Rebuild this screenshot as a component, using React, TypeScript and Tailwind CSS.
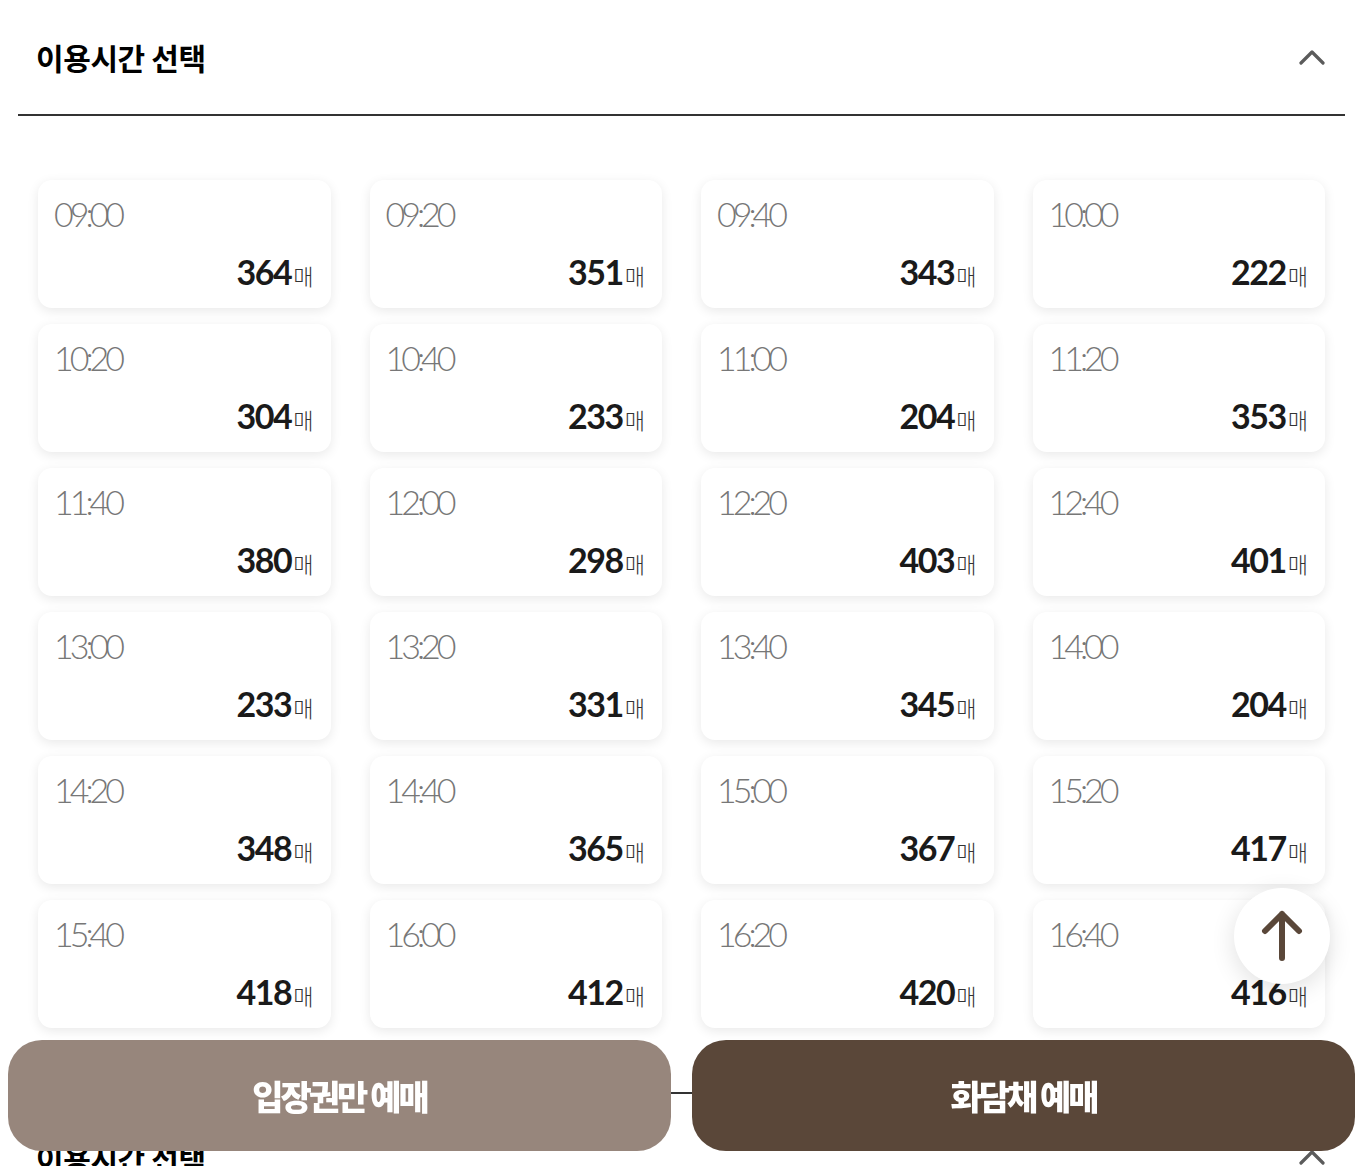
import React from 'react';

const slots = [
  { time: '09:00', count: 364 },
  { time: '09:20', count: 351 },
  { time: '09:40', count: 343 },
  { time: '10:00', count: 222 },
  { time: '10:20', count: 304 },
  { time: '10:40', count: 233 },
  { time: '11:00', count: 204 },
  { time: '11:20', count: 353 },
  { time: '11:40', count: 380 },
  { time: '12:00', count: 298 },
  { time: '12:20', count: 403 },
  { time: '12:40', count: 401 },
  { time: '13:00', count: 233 },
  { time: '13:20', count: 331 },
  { time: '13:40', count: 345 },
  { time: '14:00', count: 204 },
  { time: '14:20', count: 348 },
  { time: '14:40', count: 365 },
  { time: '15:00', count: 367 },
  { time: '15:20', count: 417 },
  { time: '15:40', count: 418 },
  { time: '16:00', count: 412 },
  { time: '16:20', count: 420 },
  { time: '16:40', count: 416 },
];

const kr = "font-['Noto_Sans_CJK_KR','Noto_Sans',sans-serif]";
const lato = "font-['Lato','Noto_Sans_CJK_KR',sans-serif]";

function Header() {
  return (
    <div className="flex h-[116px] items-center justify-between border-b-2 border-[#333] pl-[18px] pr-[20px]">
      <h2 className={`${kr} text-[30px] font-bold tracking-[-0.4px] text-black`}>이용시간 선택</h2>
      <svg width="26" height="16" viewBox="0 0 26 16" fill="none">
        <path d="M2 14 13 3l11 11" stroke="#5b5b5b" strokeWidth="3.2" strokeLinecap="round" strokeLinejoin="round" />
      </svg>
    </div>
  );
}

export default function App() {
  return (
    <div className="min-h-screen bg-white">
      <div className="px-[18px]">
        <Header />
        <div className="border-b-2 border-[#333] px-5 pb-16 pt-16">
          <div className="grid grid-cols-4 gap-x-[39px] gap-y-4">
            {slots.map((s) => (
              <button
                key={s.time}
                className="flex h-[128px] flex-col justify-between rounded-[14px] bg-white pb-[19px] pl-4 pr-[17px] pt-[17px] text-left shadow-[0_3px_12px_rgba(0,0,0,0.09)]"
              >
                <span className={`${lato} text-[34px] font-light leading-none tracking-[-4px] text-[#777]`}>{s.time}</span>
                <span className="flex items-baseline justify-end">
                  <span className={`${lato} text-[34px] font-bold leading-none tracking-[-1.5px] text-[#1a1a1a]`}>{s.count}</span>
                  <span className={`${kr} ml-[2px] text-[22px] font-light leading-none text-[#333]`}>매</span>
                </span>
              </button>
            ))}
          </div>
        </div>
        <div className="mt-[6px]">
          <Header />
        </div>
      </div>

      <button className="fixed bottom-[182px] right-[33px] flex h-[96px] w-[96px] items-center justify-center rounded-full bg-white shadow-[0_6px_24px_rgba(0,0,0,0.12)]">
        <svg width="44" height="52" viewBox="0 0 44 52" fill="none">
          <path d="M5 21 22 4l17 17M22 4v44" stroke="#5a4739" strokeWidth="6" strokeLinecap="round" strokeLinejoin="round" />
        </svg>
      </button>

      <div className="fixed bottom-[15px] left-2 right-2 flex gap-[21px]">
        <button className={`${kr} flex h-[111px] flex-1 items-center justify-center rounded-[34px] bg-[#97867c] text-[34px] font-black tracking-[-3px] text-white`}>
          입장권만 예매
        </button>
        <button className={`${kr} flex h-[111px] flex-1 items-center justify-center rounded-[34px] bg-[#5a4739] text-[34px] font-black tracking-[-3px] text-white`}>
          화담채 예매
        </button>
      </div>
    </div>
  );
}
